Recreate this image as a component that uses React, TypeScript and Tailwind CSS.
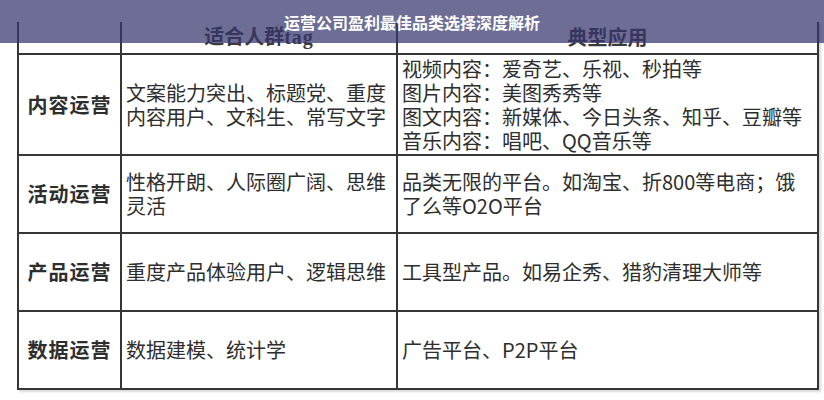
const rows = [
  {
    role: "内容运营",
    people: ["文案能力突出、标题党、重度", "内容用户、文科生、常写文字"],
    apps: [
      "视频内容：爱奇艺、乐视、秒拍等",
      "图片内容：美图秀秀等",
      "图文内容：新媒体、今日头条、知乎、豆瓣等",
      "音乐内容：唱吧、QQ音乐等",
    ],
    h: "h-[101px]",
  },
  {
    role: "活动运营",
    people: ["性格开朗、人际圈广阔、思维", "灵活"],
    apps: ["品类无限的平台。如淘宝、折800等电商；饿", "了么等O2O平台"],
    h: "h-[78px]",
  },
  {
    role: "产品运营",
    people: ["重度产品体验用户、逻辑思维"],
    apps: ["工具型产品。如易企秀、猎豹清理大师等"],
    h: "h-[78px]",
  },
  {
    role: "数据运营",
    people: ["数据建模、统计学"],
    apps: ["广告平台、P2P平台"],
    h: "h-[78px]",
  },
];

const cjk = "font-['Noto_Sans_CJK_SC',sans-serif]";

export default function App() {
  return (
    <div className={`relative w-[824px] h-[400px] bg-white overflow-hidden ${cjk}`}>
      <div className="pt-[22px] pl-[17px]">
        <table className="border-collapse table-fixed w-[800px] text-[#2e2e2e] shadow-[2px_2px_2px_rgba(0,0,0,0.15)]">
          <colgroup>
            <col className="w-[103px]" />
            <col className="w-[276px]" />
            <col className="w-[421px]" />
          </colgroup>
          <thead>
            <tr className="h-[32px]">
              <th className="border-x-2 border-b-2 border-[#363636]" />
              <th className="border-x-2 border-b-2 border-[#363636] text-[20px] font-bold text-[#3a3a3a] leading-none align-bottom pb-[6px]">
                适合人群<span className="font-['Liberation_Serif',serif] tracking-[1px]">tag</span>
              </th>
              <th className="border-x-2 border-b-2 border-[#363636] text-[20px] font-bold text-[#3a3a3a] leading-none align-bottom pb-[6px]">
                典型应用
              </th>
            </tr>
          </thead>
          <tbody>
            {rows.map((r) => (
              <tr key={r.role} className={r.h}>
                <td className="border-2 border-[#363636] text-center text-[20px] font-bold tracking-[1px]">
                  {r.role}
                </td>
                <td className="border-2 border-[#363636] pl-[4px] text-[20px] leading-[24px] whitespace-nowrap">
                  {r.people.map((l) => (
                    <div key={l}>{l}</div>
                  ))}
                </td>
                <td className="border-2 border-[#363636] pl-[4px] text-[20px] leading-[24px] whitespace-nowrap">
                  {r.apps.map((l) => (
                    <div key={l}>{l}</div>
                  ))}
                </td>
              </tr>
            ))}
          </tbody>
        </table>
      </div>
      <div className="absolute top-0 left-0 w-full h-[43px] bg-[rgba(52,52,108,0.72)] flex items-center justify-center">
        <span className="text-white text-[16px] font-bold">运营公司盈利最佳品类选择深度解析</span>
      </div>
    </div>
  );
}
